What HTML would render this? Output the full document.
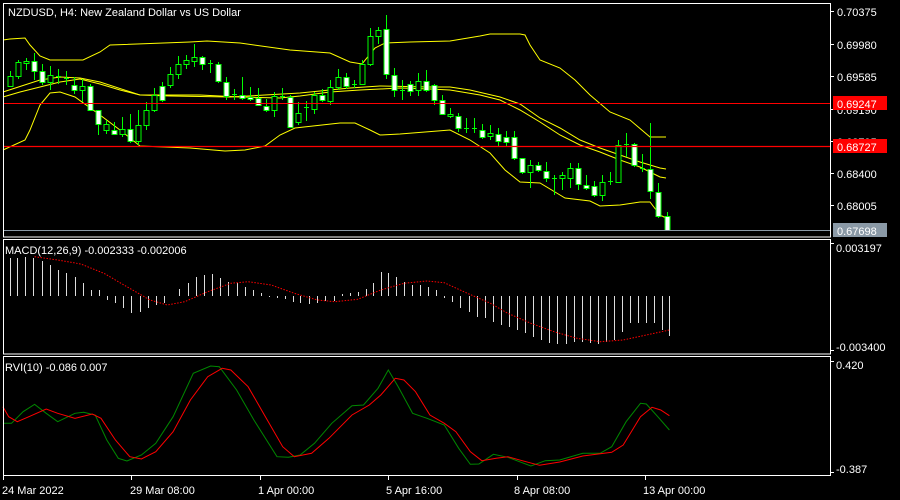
<!DOCTYPE html>
<html><head><meta charset="utf-8"><style>
html,body{margin:0;padding:0;background:#000;width:900px;height:500px;overflow:hidden}
svg{display:block}
text{font-family:"Liberation Sans",sans-serif;font-size:11px;fill:#fff}
</style></head><body>
<svg id="s" width="900" height="500" xmlns="http://www.w3.org/2000/svg">
<rect width="900" height="500" fill="#000"/>
<g id="g"></g>
<g fill="none" stroke="#fff" stroke-width="1">
<rect x="3.5" y="3.5" width="827" height="233.5"/>
<rect x="3.5" y="239.5" width="827" height="114.5"/>
<rect x="3.5" y="356.5" width="827" height="119"/>
<path d="M830 11.5h4M830 44.5h4M830 76.5h4M830 109.5h4M830 141.5h4M830 173.5h4M830 205.5h4M830 243.5h4M830 350.5h4M830 361.5h4M830 472.5h4M3.5 476v4M131.5 476v4M260.5 476v4M388.5 476v4M517.5 476v4M645.5 476v4"/>
</g>
<line x1="4" y1="103.5" x2="830" y2="103.5" stroke="#f00" stroke-width="1"/>
<line x1="4" y1="146.5" x2="830" y2="146.5" stroke="#f00" stroke-width="1.3"/>
<line x1="4" y1="230.5" x2="830" y2="230.5" stroke="#8a99a6" stroke-width="1"/>
<text x="8" y="16">NZDUSD, H4:  New Zealand Dollar vs US Dollar</text>
<text x="837" y="16">0.70375</text>
<text x="837" y="49">0.69980</text>
<text x="837" y="81">0.69585</text>
<text x="837" y="114">0.69190</text>
<text x="837" y="146">0.68795</text>
<text x="837" y="178">0.68400</text>
<text x="837" y="210">0.68005</text>
<rect x="833" y="96" width="54" height="14" fill="#f00"/>
<rect x="833" y="139" width="54" height="14" fill="#f00"/>
<rect x="833" y="223" width="54" height="14" fill="#8a99a6"/>
<text x="837" y="108">0.69247</text>
<text x="837" y="151">0.68727</text>
<text x="837" y="235">0.67698</text>
<text x="836" y="252">0.003197</text>
<text x="836" y="351">-0.003400</text>
<text x="836" y="369">0.420</text>
<text x="836" y="473">-0.387</text>
<text x="5" y="254">MACD(12,26,9) -0.002333 -0.002006</text>
<text x="5" y="371">RVI(10) -0.086 0.007</text>
<text x="2" y="494">24 Mar 2022</text>
<text x="130" y="494">29 Mar 08:00</text>
<text x="258" y="494">1 Apr 00:00</text>
<text x="386" y="494">5 Apr 16:00</text>
<text x="514" y="494">8 Apr 08:00</text>
<text x="643" y="494">13 Apr 00:00</text>
</svg>
<script>
var g=document.getElementById('g'),NS='http://www.w3.org/2000/svg';
function el(t,a){var e=document.createElementNS(NS,t);for(var k in a)e.setAttribute(k,a[k]);g.appendChild(e);return e;}
function pl(p,c,w,d){el('polyline',{points:p.map(function(q){return q.join(',')}).join(' '),fill:'none',stroke:c,'stroke-width':w||1,'stroke-dasharray':d||''});}
pl([[3,40],[10,39],[25,38],[30,45],[40,56],[50,60],[83,60],[100,52],[110,45],[190,42],[207,41],[240,43],[290,50],[330,53],[350,62],[362,64],[375,48],[385,43],[410,42],[450,41],[480,36],[490,34],[520,34],[525,35],[530,45],[540,60],[560,68],[575,80],[590,95],[610,112],[630,120],[650,137],[666,137]],'#ff0');
pl([[3,150],[25,140],[30,130],[40,105],[50,93],[60,92],[75,97],[100,115],[120,130],[140,146],[190,148],[225,151],[245,150],[265,146],[280,135],[295,128],[340,123],[355,123],[370,130],[380,135],[400,134],[450,130],[470,140],[490,153],[505,170],[520,182],[540,183],[560,195],[565,198],[590,201],[600,206],[620,205],[640,202],[650,202],[660,215],[666,218]],'#ff0');
pl([[3,97],[20,92],[40,87],[60,82],[80,79],[100,84],[120,90],[140,95],[170,95],[200,95],[240,97],[280,98],[300,96],[330,92],[360,90],[380,89],[400,88],[430,89],[450,90],[480,95],[500,100],[520,110],[540,122],[560,135],[580,145],[600,152],[620,160],[640,167],[660,177],[666,178]],'#ff0');
pl([[3,92],[40,80],[60,77],[80,78],[100,82],[140,95],[170,96],[230,97],[300,93],[350,88],[380,86],[430,87],[450,87],[470,90],[500,97],[520,104],[540,118],[560,128],[580,140],[600,148],[620,155],[640,162],[660,168],[666,169]],'#ff0');
var C=[[10,'u',76,86,71,87],[18,'u',62,76,60,79],[26,'u',61,63,58,70],[34,'d',61,71,53,80],[42,'d',71,82,64,85],[50,'u',75,82,66,90],[58,'n',76,76,69,84],[66,'n',78,78,71,85],[74,'d',85,90,77,94],[82,'u',86,90,79,102],[90,'d',86,110,84,110],[98,'d',110,124,110,135],[106,'u',124,130,120,134],[114,'d',130,134,122,135],[122,'u',129,134,117,137],[130,'d',129,141,114,143],[138,'u',125,141,110,145],[146,'u',110,125,102,130],[154,'u',95,110,88,112],[162,'d',86,100,82,102],[170,'u',74,85,67,88],[178,'u',64,74,56,79],[186,'u',60,64,55,69],[194,'u',57,61,44,67],[202,'d',57,64,56,70],[210,'n',63,63,60,73],[218,'d',64,81,62,83],[226,'d',82,96,77,100],[234,'n',94,94,89,100],[242,'d',95,98,77,100],[250,'d',97,99,87,101],[258,'d',98,105,88,106],[266,'d',106,110,99,112],[274,'u',96,110,92,117],[282,'n',96,96,88,100],[290,'d',97,127,95,128],[298,'u',113,122,102,125],[306,'n',107,107,101,121],[314,'u',95,109,92,114],[322,'d',95,100,89,102],[330,'u',87,101,80,105],[338,'u',77,87,69,90],[346,'d',77,86,73,89],[354,'n',84,84,80,88],[362,'u',64,84,60,85],[370,'u',36,64,28,66],[378,'u',30,36,27,44],[386,'d',29,74,15,79],[394,'d',75,90,68,97],[402,'n',90,90,80,100],[410,'d',84,91,81,96],[418,'u',81,90,73,96],[426,'d',81,90,70,92],[434,'d',85,100,84,105],[442,'d',100,114,95,115],[450,'u',114,116,108,118],[458,'d',116,128,113,132],[466,'n',128,128,118,133],[474,'n',128,128,118,133],[482,'d',130,137,124,139],[490,'u',133,136,125,140],[498,'d',134,141,128,146],[506,'d',137,142,131,146],[514,'d',137,158,131,160],[522,'d',158,172,158,174],[530,'u',165,172,160,188],[538,'d',165,170,162,172],[546,'d',171,178,162,182],[554,'n',178,178,175,195],[562,'u',175,178,172,190],[570,'u',168,178,163,188],[578,'d',168,184,163,190],[586,'d',185,188,175,190],[594,'d',186,195,181,197],[602,'u',182,195,175,201],[610,'n',181,181,172,185],[618,'u',145,182,140,183],[626,'n',144,144,133,157],[634,'d',144,165,143,167],[642,'n',168,168,154,172],[650,'d',169,191,123,199],[658,'d',192,216,183,218],[667,'d',216,230,212,231]];
C.forEach(function(c){var x=c[0];
el('line',{x1:x+.5,y1:c[4],x2:x+.5,y2:c[5],stroke:'#0f0'});
if(c[1]=='n'){el('line',{x1:x-2,y1:c[2]+.5,x2:x+3,y2:c[2]+.5,stroke:'#0f0'});}
else el('rect',{x:x-2,y:c[2]+.5,width:5,height:Math.max(1,c[3]-c[2]),fill:c[1]=='d'?'#fff':'#000',stroke:'#0f0'});});
var H=[[10,258],[17,258],[25,257],[33,258],[42,261],[50,265],[58,270],[66,273],[75,277],[83,283],[91,290],[99,290],[107,300],[115,303],[123,308],[131,313],[140,312],[148,308],[156,305],[164,303],[179,289],[188,283],[196,277],[204,275],[212,274],[220,278],[228,282],[237,283],[245,287],[253,290],[261,293],[269,297],[277,298],[285,299],[293,302],[300,303],[309,304],[317,303],[325,301],[334,301],[342,294],[350,293],[358,292],[366,289],[373,283],[381,272],[388,273],[396,277],[404,282],[412,285],[420,285],[428,287],[436,290],[444,298],[452,302],[460,308],[469,312],[477,317],[485,318],[493,322],[501,325],[509,327],[517,330],[525,333],[533,337],[541,340],[549,343],[557,344],[566,344],[574,342],[582,342],[590,343],[598,344],[606,342],[614,340],[622,332],[630,323],[638,323],[646,323],[654,323],[662,330],[669,336]];
H.forEach(function(h){el('line',{x1:h[0]+.5,y1:296,x2:h[0]+.5,y2:h[1],stroke:'#ddd'});});
function cv(a){return a.map(function(p){return [(p[0]/1.733).toFixed(1),(240+p[1]/3).toFixed(1)];});}
pl(cv([[60,50],[100,60],[140,72],[180,100],[220,140],[260,180],[290,195],[320,185],[360,155],[400,130],[430,125],[470,135],[510,160],[550,180],[580,185],[620,178],[660,150],[700,130],[740,123],[770,128],[810,160],[850,190],[880,220],[920,250],[960,275],[1000,295],[1040,305],[1080,300],[1120,285],[1160,270]]),'#f00',1,'1.5,1.5');
pl(cv([[5,550],[20,550],[40,515],[60,493],[80,520],[100,545],[130,520],[145,517],[165,525],[185,600],[205,655],[220,663],[245,645],[270,610],[300,530],[335,400],[365,378],[380,380],[410,450],[440,540],[480,650],[500,652],[520,645],[545,610],[575,550],[610,497],[630,495],[655,445],[673,390],[690,440],[715,520],[740,535],[770,555],[795,625],[815,673],[830,672],[855,643],[880,652],[920,678],[945,662],[970,660],[1010,640],[1040,640],[1060,620],[1085,545],[1110,490],[1120,492],[1140,530],[1160,570]]),'#080');
pl(cv([[5,500],[15,530],[30,545],[50,530],[80,507],[100,520],[130,535],[160,522],[175,535],[200,600],[225,650],[245,657],[270,635],[300,575],[330,480],[360,410],[385,385],[400,390],[430,440],[460,530],[490,620],[510,650],[540,640],[570,595],[610,525],[640,495],[660,465],[685,415],[700,420],[720,455],[745,525],[770,550],[790,575],[815,635],[835,662],[860,655],[880,650],[905,662],[935,676],[970,666],[1010,648],[1060,637],[1080,615],[1110,530],[1130,502],[1145,510],[1160,527]]),'#f00');
</script>
</body></html>
